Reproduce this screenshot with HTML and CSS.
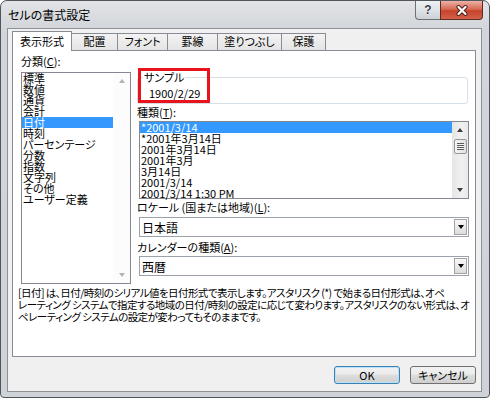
FILE: index.html
```html
<!DOCTYPE html>
<html>
<head>
    <title>セルの書式設定</title>
    <link rel="stylesheet" href="styles.css">
</head>
<body>
    <div class="window">
        <div class="titlebar">
            <span class="title">セルの書式設定</span>
            <div class="controls">
                <div class="ctl help">?</div>
                <div class="ctl close">
                    <svg width="14" height="11" viewBox="0 0 14 11">
                        <path d="M3.5 2 L10.5 9 M10.5 2 L3.5 9" stroke="#4a1c14" stroke-width="4" stroke-linecap="round"/>
                        <path d="M3.5 2 L10.5 9 M10.5 2 L3.5 9" stroke="#fff" stroke-width="2.2" stroke-linecap="round"/>
                    </svg>
                </div>
            </div>
        </div>
        <div class="client">
            <div class="tabs">
                <div class="tab active tab-format">表示形式</div>
                <div class="tab tab-align">配置</div>
                <div class="tab tab-font">フォント</div>
                <div class="tab tab-border">罫線</div>
                <div class="tab tab-fill">塗りつぶし</div>
                <div class="tab tab-protect">保護</div>
            </div>
            <div class="panel">
                <div class="cols">
                    <div class="left">
                        <div class="label">分類(<u>C</u>):</div>
                        <div class="listbox cat">
                            <div class="items">
                                <div class="item">標準</div>
                                <div class="item">数値</div>
                                <div class="item">通貨</div>
                                <div class="item">会計</div>
                                <div class="item selected">日付</div>
                                <div class="item">時刻</div>
                                <div class="item">パーセンテージ</div>
                                <div class="item">分数</div>
                                <div class="item">指数</div>
                                <div class="item">文字列</div>
                                <div class="item">その他</div>
                                <div class="item">ユーザー定義</div>
                            </div>
                            <div class="vscroll off">
                                <div class="arrow"><span class="tri up"></span></div>
                                <div class="track"></div>
                                <div class="arrow"><span class="tri down"></span></div>
                            </div>
                        </div>
                    </div>
                    <div class="right">
                        <fieldset class="sample">
                            <legend>サンプル</legend>
                            <div class="sample-value">1900/2/29</div>
                        </fieldset>
                        <div class="label gap2">種類(<u>T</u>):</div>
                        <div class="listbox types">
                            <div class="items">
                                <div class="item selected">*2001/3/14</div>
                                <div class="item">*2001年3月14日</div>
                                <div class="item">2001年3月14日</div>
                                <div class="item">2001年3月</div>
                                <div class="item">3月14日</div>
                                <div class="item">2001/3/14</div>
                                <div class="item">2001/3/14 1:30 PM</div>
                            </div>
                            <div class="vscroll">
                                <div class="arrow"><span class="tri up"></span></div>
                                <div class="thumb"><span class="grip"></span></div>
                                <div class="track"></div>
                                <div class="arrow"><span class="tri down"></span></div>
                            </div>
                        </div>
                        <div class="label gap2">ロケール (国または地域)(<u>L</u>):</div>
                        <div class="combo gap3">
                            <span class="combo-text">日本語</span>
                            <span class="drop"><span class="tri down"></span></span>
                        </div>
                        <div class="label gap4">カレンダーの種類(<u>A</u>):</div>
                        <div class="combo gap2">
                            <span class="combo-text">西暦</span>
                            <span class="drop"><span class="tri down"></span></span>
                        </div>
                        <div class="redbox"></div>
                    </div>
                </div>
                <p class="desc">
                    <span class="line">[日付] は、日付/時刻のシリアル値を日付形式で表示します。アスタリスク (*) で始まる日付形式は、オペ</span>
                    <span class="line">レーティング システムで指定する地域の日付/時刻の設定に応じて変わります。アスタリスクのない形式は、オ</span>
                    <span class="line">ペレーティング システムの設定が変わってもそのままです。</span>
                </p>
            </div>
            <div class="buttons">
                <div class="btn default">OK</div>
                <div class="btn">キャンセル</div>
            </div>
        </div>
    </div>
</body>
</html>
```

FILE: styles.css
```css
* {
    box-sizing: border-box;
}
body {
    margin: 0;
    width: 490px;
    height: 398px;
    overflow: hidden;
    background: #fff;
    font-family: "Noto Sans CJK JP", sans-serif;
    font-size: 11px;
    color: #000;
    font-feature-settings: "palt" 1;
}
u {
    text-decoration: underline;
}

/* window frame */
.window {
    width: 490px;
    height: 398px;
    border: 1px solid #50565d;
    border-radius: 7px 7px 4px 4px;
    background: linear-gradient(#e2e4e7, #d2d5d9 28px, #cfd2d6);
    display: flex;
    flex-direction: column;
    padding: 0 7px 5px 6px;
}
.titlebar {
    height: 27px;
    display: flex;
    align-items: flex-start;
}
.title {
    font-size: 12px;
    line-height: 14px;
    margin: 7px 0 0 1px;
}
.controls {
    margin-left: auto;
    margin-right: -1px;
    display: flex;
}
.ctl {
    height: 19px;
    display: flex;
    align-items: center;
    justify-content: center;
    border: 1px solid #6b7178;
    border-top: none;
}
.help {
    width: 25px;
    border-right: none;
    border-radius: 0 0 0 4px;
    background: linear-gradient(#eef0f2, #dfe2e6 50%, #cdd1d6);
    font-family: "Liberation Sans", sans-serif;
    font-weight: bold;
    font-size: 12px;
    color: #3c4148;
    text-shadow: 0 0 2px #fff;
}
.close {
    width: 43px;
    border-color: #5e2a22;
    border-radius: 0 0 4px 0;
    background: linear-gradient(#eab3a8, #d86a55 45%, #c6432b 55%, #d4624a);
}

/* client area */
.client {
    flex: 1;
    border: 1px solid #8d9297;
    background: #f0f0f0;
    padding: 2px 5px 0 4px;
    display: flex;
    flex-direction: column;
}
.tabs {
    display: flex;
    height: 19px;
    align-items: flex-end;
    position: relative;
    z-index: 1;
}
.tab {
    height: 17px;
    line-height: 15px;
    text-align: center;
    white-space: nowrap;
    border: 1px solid #898c95;
    border-bottom: none;
    margin-left: -1px;
    background: linear-gradient(#f3f3f3, #e4e4e4);
}
.tab.active {
    height: 20px;
    margin-left: 0;
    margin-bottom: -1px;
    line-height: 18px;
    background: #fff;
    position: relative;
    z-index: 1;
}
.tab-format { width: 60px; }
.tab-align { width: 47px; }
.tab-font { width: 51px; }
.tab-border { width: 51px; }
.tab-fill { width: 65px; }
.tab-protect { width: 45px; }

.panel {
    height: 307px;
    border: 1px solid #898c95;
    background: #fff;
    padding: 4px 5px 0 5px;
}
.cols {
    display: flex;
    gap: 6px;
    height: 229px;
}
.left {
    width: 110px;
    margin-left: 3px;
}
.right {
    width: 333px;
    position: relative;
}
.label {
    height: 13px;
    line-height: 13px;
    white-space: nowrap;
}
.gap2 { margin-top: 2px; }
.gap3 { margin-top: 3px; }
.gap4 { margin-top: 4px; }

/* list boxes */
.listbox {
    border: 1px solid #828790;
    background: #fff;
    display: flex;
}
.listbox .items {
    flex: 1;
}
.item {
    height: 11px;
    line-height: 11px;
    padding-left: 1px;
    white-space: nowrap;
}
.item.selected {
    background: #3399ff;
    color: #fff;
}
.cat {
    height: 212px;
    margin-top: 4px;
}
.types {
    height: 78px;
    margin: 2px 1px 0 2px;
}
.vscroll {
    width: 16px;
    display: flex;
    flex-direction: column;
    background: linear-gradient(90deg, #e5e5e5, #f1f1f1 60%, #e9e9e9);
}
.vscroll.off {
    width: 17px;
    background: #fcfcfc;
}
.arrow {
    height: 16px;
    display: flex;
    align-items: center;
    justify-content: center;
}
.track {
    flex: 1;
}
.thumb {
    height: 15px;
    margin: 1px 1px 0 2px;
    border: 1px solid #979797;
    border-radius: 2px;
    background: linear-gradient(90deg, #f4f4f4, #e2e2e2);
    display: flex;
    align-items: center;
    justify-content: center;
}
.grip {
    width: 7px;
    height: 7px;
    background: repeating-linear-gradient(#5a5a5a 0 1px, #f4f4f4 1px 2px);
}
.tri {
    width: 0;
    height: 0;
    border-left: 3.5px solid transparent;
    border-right: 3.5px solid transparent;
}
.tri.up {
    border-bottom: 4px solid #3c3c3c;
}
.tri.down {
    border-top: 4px solid #3c3c3c;
}
.off .tri.up {
    border-bottom-color: #b3b3b3;
}
.off .tri.down {
    border-top-color: #b3b3b3;
}

/* sample group */
.sample {
    margin: 16px 2px 0 0;
    height: 33px;
    padding: 0 0 0 11px;
    border: 1px solid #d5dfe5;
    border-radius: 3px;
}
.sample legend {
    margin-left: -6px;
    padding: 0 1px;
    line-height: 12px;
}
.sample-value {
    margin-top: 4px;
    line-height: 12px;
}
.redbox {
    position: absolute;
    left: 1px;
    top: 13px;
    width: 72px;
    height: 35px;
    border: 3px solid #e8131d;
}

/* combo boxes */
.combo {
    height: 20px;
    margin-left: 2px;
    margin-right: 1px;
    border: 1px solid #9ca2a9;
    background: #fff;
    display: flex;
    align-items: center;
    padding: 0 1px 0 2px;
}
.combo-text {
    flex: 1;
    font-size: 12px;
}
.drop {
    width: 13px;
    height: 16px;
    border: 1px solid #a3a3a3;
    background: linear-gradient(#f8f8f8, #dcdcdc);
    display: flex;
    align-items: center;
    justify-content: center;
}
.drop .tri.down {
    border-top-color: #000;
}

/* description */
.desc {
    margin: 3px 0 0 0;
    font-size: 10.5px;
    letter-spacing: -0.55px;
    line-height: 12px;
}
.line {
    display: block;
    white-space: nowrap;
}

/* dialog buttons */
.buttons {
    display: flex;
    justify-content: flex-end;
    gap: 10px;
    margin-top: 9px;
}
.btn {
    width: 66px;
    height: 18px;
    border: 1px solid #707070;
    border-radius: 3px;
    background: linear-gradient(#f2f2f2, #ebebeb 45%, #dddddd 50%, #cfcfcf);
    display: flex;
    align-items: center;
    justify-content: center;
    font-size: 11px;
}
.btn.default {
    border-color: #3c7fb1;
    box-shadow: inset 0 0 0 1px #b6e3f9;
}
```
